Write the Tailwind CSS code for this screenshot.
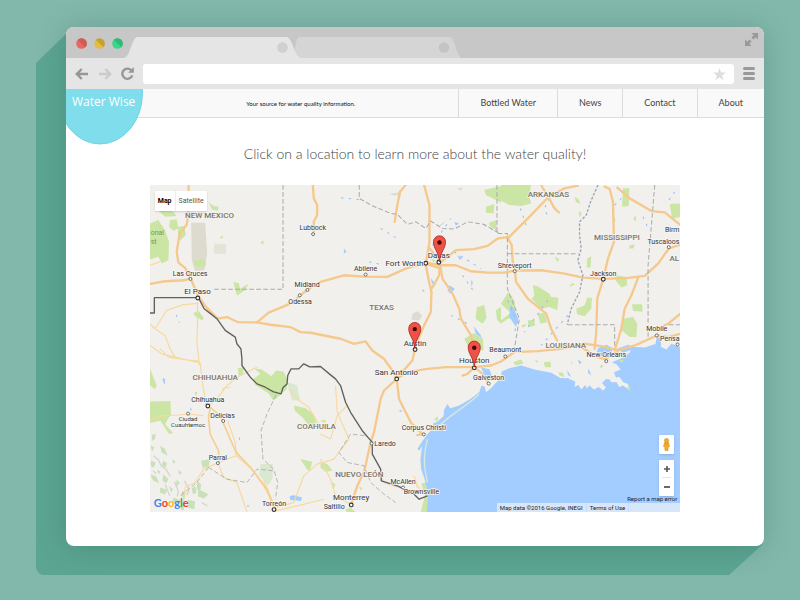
<!DOCTYPE html>
<html lang="en">
<head>
<meta charset="utf-8">
<meta name="viewport" content="width=device-width, initial-scale=1">
<title>Water Wise</title>
<script src="https://cdn.jsdelivr.net/npm/@tailwindcss/browser@4"></script>
</head>
<body class="flex min-h-screen flex-col bg-[#82b8ab] pt-[27px] pr-9 pb-[54px] pl-[66px] font-[Lato,sans-serif] text-[#444]">
<div class="relative flex flex-1 flex-col">
  <!-- long shadow -->
  <div class="absolute top-[7px] right-0.5 -bottom-[29px] -left-[30px] rounded-bl-lg bg-[#5ca592] [clip-path:polygon(30px_0,100%_0,100%_calc(100%_-_30px),calc(100%_-_33px)_100%,0_100%,0_29px)]"></div>
  <div class="relative flex flex-1 flex-col overflow-hidden rounded-lg bg-white shadow-[0_2px_28px_rgba(40,90,78,0.28)]">

    <!-- tab strip -->
    <div class="flex h-[31px] shrink-0 items-end bg-[#c7c7c7]">
      <div class="flex h-full w-[58px] items-center gap-[7px] pt-0.5 pl-[10px]">
        <svg class="size-[11px]" viewBox="0 0 11 11"><circle cx="5.500" cy="5.500" r="5.300" fill="#e96763"/><path d="M1.700 1.700A5.300 5.300 0 0 1 9.300 9.300Z" fill="#cf5c58"/></svg>
        <svg class="size-[11px]" viewBox="0 0 11 11"><circle cx="5.500" cy="5.500" r="5.300" fill="#e3bd3f"/><path d="M1.700 1.700A5.300 5.300 0 0 1 9.300 9.300Z" fill="#c4a238"/></svg>
        <svg class="size-[11px]" viewBox="0 0 11 11"><circle cx="5.500" cy="5.500" r="5.300" fill="#36d98a"/><path d="M1.700 1.700A5.300 5.300 0 0 1 9.300 9.300Z" fill="#2fba77"/></svg>
      </div>
      <svg class="h-[21px] w-[336px]" viewBox="0 0 336 21">
        <path d="M168 21C172 20 170 0 176 0H325C332 0 331 19 339 21Z" fill="#d5d5d5"/>
        <path d="M0 21C7 20 7 0 14 0H162C169 0 170 20 177 21Z" fill="#e5e5e5"/>
        <circle cx="158.500" cy="10.500" r="5.300" fill="#d0d0d0"/><circle cx="320" cy="10.500" r="5.300" fill="#c4c4c4"/>
      </svg>
      <button class="mr-1.5 mb-3 ml-auto size-[13px]" aria-label="Full screen">
        <svg viewBox="0 0 13 13" fill="#999"><path d="M6.500 0H13V6.500L10.800 4.300L8.500 6.600L6.400 4.500L8.700 2.200ZM0 6.500L2.200 8.700L4.500 6.400L6.600 8.500L4.300 10.800L6.500 13H0Z"/></svg>
      </button>
    </div>

    <!-- toolbar -->
    <div class="flex h-[31px] shrink-0 items-center bg-[#e5e5e5] pr-[9px] pl-[9px]">
      <button class="w-[13px]" aria-label="Back"><svg viewBox="0 0 13 12" fill="none" stroke="#969696" stroke-width="2.400"><path d="M6.700 1L1.800 6L6.700 11M2 6H13"/></svg></button>
      <button class="ml-[11px] w-[13px]" aria-label="Forward"><svg viewBox="0 0 13 12" fill="none" stroke="#cbcbcb" stroke-width="2.400"><path d="M6.300 1L11.200 6L6.300 11M11 6H0"/></svg></button>
      <button class="ml-[9px] w-[13px]" aria-label="Reload"><svg viewBox="0 0 13 13"><path d="M10.300 3.300A5.100 5.100 0 1 0 11.300 8.300" fill="none" stroke="#969696" stroke-width="2.300"/><path d="M12.800 0V5.700H7.200Z" fill="#969696"/></svg></button>
      <div class="relative ml-[9px] flex-1">
        <input type="text" aria-label="Address" class="block h-5 w-full rounded-[3px] bg-white px-2 text-xs outline-none">
        <button class="absolute top-[4px] right-2 w-[13px]" aria-label="Bookmark"><svg viewBox="0 0 24 23"><path d="M12 0L15 8.500H24L16.900 13.900L19.500 22.500L12 17.300L4.500 22.500L7.100 13.900L0 8.500H9Z" fill="#dedede"/></svg></button>
      </div>
      <button class="ml-[9px] flex w-3 flex-col gap-0.5" aria-label="Menu"><span class="h-[3px] w-full rounded-sm bg-[#999]"></span><span class="h-[3px] w-full rounded-sm bg-[#999]"></span><span class="h-[3px] w-full rounded-sm bg-[#999]"></span></button>
    </div>

    <!-- site header -->
    <header class="relative flex h-[29px] shrink-0 items-stretch border-b border-[#dcdcdc] bg-[#f9f9f9]">
      <a href="#" class="absolute top-0 left-0 z-10 h-[56px] w-[77px]">
        <svg class="absolute inset-0" viewBox="0 0 77 56"><ellipse cx="34" cy="4" rx="42.500" ry="51" fill="#80ddeb" stroke="#6dd3e2"/></svg>
        <span class="relative block pt-[5px] pl-1.5 font-['Open_Sans',sans-serif] text-xs leading-4 font-medium whitespace-nowrap text-white">Water Wise</span>
      </a>
      <p class="flex flex-1 items-center justify-center pl-[77px] text-[6px] text-[#111]">Your source for water quality information.</p>
      <nav class="flex text-[9px] leading-4">
        <a href="#" class="flex items-center border-l border-[#dcdcdc] px-[21px]">Bottled Water</a>
        <a href="#" class="flex items-center border-l border-[#dcdcdc] px-[21px]">News</a>
        <a href="#" class="flex items-center border-l border-[#dcdcdc] px-[21px]">Contact</a>
        <a href="#" class="flex items-center border-l border-[#dcdcdc] px-[21px]">About</a>
      </nav>
    </header>

    <main class="px-[12%] pt-6 pb-[34px]">
      <h1 class="text-center text-sm leading-6 font-light whitespace-nowrap">Click on a location to learn more about the water quality!</h1>
      <div class="relative mt-[19px] overflow-hidden font-[Roboto,sans-serif]">
        <svg class="block w-full" viewBox="0 0 1587 978" role="group" aria-label="Map of Texas and its neighbours">
          <defs>
            <g id="pin"><path d="M0 0C-3 -32 -18 -38 -18 -60A18 18 0 0 1 18 -60C18 -38 3 -32 0 0Z" fill="#f15145" stroke="#a42b24" stroke-width="2.500"/><circle cy="-58" r="6.500" fill="#3c0907"/></g>
            <circle id="dot" r="4.500" fill="#fff" stroke="#555" stroke-width="2.500"/>
            <circle id="big" r="5.500" fill="#fff" stroke="#333" stroke-width="3.500"/>
          </defs>
          <rect width="1587" height="978" fill="#f2f0ed"/>

          <!-- parks and forests -->
          <g fill="#cbe5a5">
            <g transform="translate(-15 -15)">
              <path d="M15 130L40 120L60 150L72 185L70 240L50 250L40 230L15 238ZM75 120L95 118L100 145L85 152L72 140ZM100 140L118 138L122 165L105 182L98 160ZM40 92L80 90L95 108L60 110ZM190 65L205 78L220 80L218 92L200 88ZM265 305L280 308L285 325L310 310L300 328L276 346L270 330ZM145 398L160 392L176 412L172 420L150 408ZM345 188L354 180L355 193ZM222 173L234 166L232 175Z"/>
              <path d="M138 128H180L186 220L178 270L150 272L140 240Z" fill="#dddbd0"/><path d="M207 190L243 192L242 222L206 220Z" fill="#e6e3d9"/>
              <path d="M150 240L180 236L182 256L160 262L146 254Z"/>
            </g>
            <g transform="translate(510 -15)">
              <path d="M490 30L540 18V68L515 55L495 45ZM495 80L520 72L518 100L495 98ZM503 128L527 120L526 150L508 140ZM468 380L490 374L497 412L485 430L464 415ZM525 390L540 380V430L528 418ZM430 475L460 458L486 476L488 510L445 505ZM330 235L345 240L338 246Z"/>
              <path d="M275 400L290 393L304 405L296 420L272 418ZM208 42L240 36L242 46L215 46ZM410 25L425 22L420 33Z" fill="#dedbd2"/>
            </g>
            <g transform="translate(1050 -15)">
              <path d="M0 15H90L85 50L90 70L60 78L25 75L0 62ZM365 25H384L382 78L362 80ZM505 72L535 70L537 110L512 116ZM220 50L232 58L238 72L224 65ZM345 285L375 290L378 315L360 322L342 300ZM225 385L250 375L258 352L272 352L270 385L250 408L228 402ZM95 315L110 318L145 340L150 350L172 352L168 390L145 380L120 385L92 355L100 345ZM110 400L130 398L138 425L118 430ZM80 420L100 418L102 436L82 440ZM60 435L78 430L68 442ZM392 372L422 372L424 394L395 392ZM365 415L395 410L408 430L405 470L385 470L362 450ZM0 420L25 400L40 385L45 412L20 415L0 430ZM22 335L40 360L45 405L25 395L0 370ZM258 235L270 228L268 262L256 262ZM385 195L400 192L396 205H383ZM160 228L175 238L168 245ZM395 115L405 106L403 125ZM332 105L343 118L338 130ZM205 320L222 312L212 308ZM232 92L242 100L235 112Z"/>
            </g>
            <g transform="translate(-15 480)">
              <path d="M15 168L76 166L78 205L60 235L84 262L72 265L46 225L15 232ZM15 70L35 120L30 130L15 120ZM278 68L294 66V88L280 92ZM322 102L345 85L325 68L350 72L378 92L392 75L414 78L426 100L424 130L405 148L384 165L368 142L330 118ZM446 180L480 188L505 205L514 240L495 245L470 215L448 195ZM465 340L500 348L494 375L484 370ZM148 138L157 140L152 152ZM524 225L540 222V232Z"/>
              <path d="M345 355H382V395L368 420L342 388ZM425 110L455 118L464 165L440 165Z" fill="#dbe8d0"/>
              <g fill="#c8e1b8">
                <path d="M20 268L32 265L30 280L22 286ZM45 300L60 310L68 330L50 320ZM55 345L66 352L62 366L50 358ZM55 385L70 400L64 412L52 404ZM95 400L104 412L92 425ZM155 405L168 415L165 440L155 430ZM168 345L196 340L190 362L172 366ZM85 455L105 462L98 478L82 470ZM18 345L32 350L26 366L18 362ZM16 385L34 392L42 412L24 404ZM46 425L66 432L60 446L44 440ZM112 435L122 440L118 458L108 450ZM140 428L150 420L154 440L144 446ZM160 430L190 445L176 458L158 452ZM72 420L84 430L78 440ZM128 462L150 466L148 490L130 486ZM110 470L120 478L114 494L104 488ZM36 372L46 376L42 386ZM82 340L92 348L84 354ZM100 372L110 380L102 388ZM16 300L28 304L22 318Z"/>
              </g>
              <path d="M25 330L40 342L48 360L64 372L76 392M88 408L100 436L96 452M60 415L74 450M118 405L132 430L126 448M24 375L34 384M170 470L186 480" fill="none" stroke="#d6d5d0" stroke-width="4"/>
            </g>
            <g transform="translate(510 480)">
              <path d="M0 348L20 355L36 375L15 378L0 365ZM75 490L90 485L105 498H78ZM302 412L318 410L328 455L318 498H300L312 450Z"/><path d="M115 420L125 428L120 435ZM30 408L45 415L38 430Z"/>
            </g>
          </g>

          <!-- sea -->
          <path d="M828 978L832 930L828 905L820 875L811 850L809 820L814 780L806 795L800 790L812 770L828 748L845 728L848 712L858 710L878 692L880 672L890 655L898 668L925 660L958 640L985 620L992 600L1002 604L1005 620L1020 608L1050 575L1052 558L1075 548L1110 540L1150 552L1200 562L1228 577L1250 578L1272 588L1270 604L1282 598L1290 612L1302 598L1306 608L1315 600L1328 612L1342 604L1356 615L1364 606L1352 592L1364 580L1375 582L1380 590L1396 590L1404 604L1415 600L1436 615L1430 595L1416 590L1404 574L1394 576L1388 560L1408 552L1397 538L1382 530L1410 518L1435 502L1442 484L1480 486L1512 476L1516 455L1530 460L1528 484L1545 492L1560 475L1587 485V978Z" fill="#a3ccff"/>
          <g fill="#a3ccff">
            <path d="M1340 488L1365 478L1385 488L1378 508L1348 512L1336 500ZM1280 522L1292 530L1284 536ZM1248 552L1260 575L1250 568ZM1312 548L1320 570L1310 562ZM1398 490L1430 478L1450 490L1415 502ZM990 545L1016 552L1022 570L1002 582L1000 566ZM1075 395L1095 425L1102 400L1088 370L1078 358ZM418 930L430 928L455 935L452 945L420 942Z"/>
            <path d="M37 577L45 580V598L40 590ZM119 664L126 672L121 675ZM744 674L755 674L750 680ZM866 125L886 108L870 118ZM910 110L925 115L915 122ZM895 300L912 310L898 325L890 315ZM840 280L850 290L844 298ZM960 285L966 290L962 305ZM968 422L990 450L992 458L975 445ZM920 210L935 218L926 224ZM580 190L588 200L580 205ZM816 310L822 318L815 320ZM742 440L746 432L740 445Z"/>
          </g>
          <g fill="#cbe5a5"><path d="M1086 530L1110 522L1118 534L1095 540ZM1178 530L1198 528L1200 545L1182 545ZM1222 560L1235 562L1240 575L1225 570ZM1345 540L1356 538L1350 550ZM1430 598L1436 602L1434 618L1428 608ZM1258 524L1264 532L1262 538ZM1404 524L1418 522L1412 532ZM850 700L862 692L860 708ZM1150 524L1162 526L1158 532Z"/></g>
          <path d="M830 760C820 800 816 830 830 890M850 735C890 690 940 668 985 625" fill="none" stroke="#d5ead8" stroke-width="4"/>
          <g fill="none" stroke="#8fbdf5" stroke-width="3" stroke-dasharray="7 16">
            <path d="M572 38L640 45M690 130L740 160M845 180L900 100M910 200L990 250M935 270L970 320M1070 345L1100 410L1090 440M1108 70L1125 120M1195 40L1180 70L1190 95M1390 60L1410 40M1475 95L1490 130M1570 20L1545 55M1190 345L1120 440M1250 390L1170 480M78 388L88 412M268 755V770M290 960H310M1000 120L1035 140M655 230L700 240M900 390L960 420"/>
          </g>

          <!-- minor roads -->
          <g fill="none" stroke="#f7d9a0" stroke-width="3.500" stroke-linejoin="round">
            <path d="M0 415L15 430L45 450L60 490L75 515L150 532L158 600L170 665M15 430L50 375L100 358L145 354M142 350V420L140 470L148 540M0 480L35 505L75 515M30 490L55 515L100 522L148 527"/>
            <path d="M170 665L200 640L230 600L262 575L290 560L320 545M215 610L240 605M0 700L40 690L85 688L115 685L160 690M232 705L255 770L258 810L300 845L340 900L370 960M258 810L205 830L160 850L135 890L105 905L100 950M205 835L220 875L260 890L290 978M372 960L360 930L340 885"/>
            <path d="M415 610L440 640L475 665L510 725M372 965L430 950L460 870L500 835L550 820L595 760L560 680L555 600M375 975L440 960L520 940M510 820L540 880L555 930L600 955M510 745L540 760L560 690L590 660M740 905L700 890L690 870M800 905L790 870M800 900L815 920M0 240L30 230"/>
          </g>
          <path d="M180 665L175 695L180 745L205 795L207 830M180 665L210 690L240 760L258 800L305 850L350 910L372 965" fill="none" stroke="#f5cf8f" stroke-width="5"/>

          <!-- major roads -->
          <g fill="none" stroke="#f5c88c" stroke-width="7" stroke-linejoin="round" stroke-linecap="round">
            <path d="M115 0L118 60L110 118L88 148L80 200L85 232L105 248L121 278L143 330L165 362L203 400L230 395L262 410L320 411L355 382L420 355L472 312L510 290L580 270L640 274L710 275L765 250L825 232L868 240"/>
            <path d="M0 296L45 288L100 285L121 280M320 411L360 418L420 425L450 440L480 442L510 448L570 460L610 475L645 468L665 495L700 520L725 555L738 578"/>
            <path d="M487 0L490 40L500 60V90L490 110V138M765 0L748 20L740 60L735 90L732 110M820 0L836 60V170L828 220L825 240L835 290L842 320L840 380L820 420L795 480L785 525L745 570L738 580L745 640L780 710L815 745M837 190L868 230L865 270L850 298L842 310"/>
            <path d="M868 232L915 195L970 192L1010 182L1040 160L1075 155L1140 90L1190 38L1240 10L1280 2M868 240L915 240L960 258L1010 262L1060 262L1091 256L1170 255L1240 265L1295 277L1356 281L1430 278L1480 272L1520 235L1552 190L1587 178"/>
            <path d="M868 240L875 280L905 325L925 370L930 400L960 450L970 490L972 530M738 580L770 560L830 550L885 545L970 545L1020 540L1050 528L1090 500L1160 497L1230 490L1300 475L1350 482L1400 495L1450 480L1517 450L1550 455L1587 445M738 580L700 615L690 640L670 740L660 770L640 860L620 900L602 955M970 545L950 565L935 570M970 545L995 565L1012 592M825 235L870 250"/>
            <path d="M1190 32L1210 70L1223 82M1187 30L1170 0M1360 5L1375 12L1385 50L1388 170L1370 220L1356 281L1338 340L1335 440L1330 490M1398 8L1435 40L1500 78L1540 82L1587 120M1460 278L1440 330L1420 370L1410 430L1390 495M1070 158L1082 180L1085 230L1092 256L1095 290L1130 340L1185 385L1200 430L1218 465M1587 385L1550 415L1515 430M1290 485L1340 515L1362 522L1385 505L1400 500M815 745L800 748"/>
          </g>

          <!-- state and national borders -->
          <g fill="none" stroke="#aaa" stroke-width="3" stroke-dasharray="14 7">
            <path d="M398 0V312H185M626 0V40L665 62L720 85L740 88L770 118L795 110L825 130L840 108L875 130L910 132L950 110L1000 118L1045 145M1038 0V145H1069V310L1105 400L1090 490M1070 206H1282M1510 0L1490 240V460M1250 418H1390V480M1587 418H1550"/>
            <path d="M377 628L350 685L332 735L338 820L370 850L382 890L375 940M175 845L230 880L290 890L320 850L370 855M175 845L140 890L90 930M642 750L600 745L565 800L590 830L640 840L660 890L700 925L735 950" stroke-width="2.500"/>
          </g>
          <path d="M1340 0L1318 50L1305 90L1285 110V150L1290 190L1280 225L1295 270L1285 320L1260 370L1248 418" fill="none" stroke="#9aa5b5" stroke-width="4" stroke-dasharray="8 5"/>
          <path d="M0 383H13V337H145L162 370L180 384L200 400L225 435L255 455L260 475L272 490L275 520L275 540L300 575L320 595L345 605L368 618L392 625L398 606L410 595L412 570L422 550L445 550L460 535L478 544L510 543L540 568L555 580L570 600L585 650L600 680L635 735L665 770V805L690 850L692 885L740 900L790 925L805 940L830 930" fill="none" stroke="#606060" stroke-width="4" stroke-linejoin="round"/>

          <!-- town markers -->
          <use href="#dot" x="121" y="281"/><use href="#dot" x="488" y="147"/><use href="#dot" x="448" y="330"/><use href="#dot" x="471" y="314"/><use href="#dot" x="645" y="268"/><use href="#dot" x="1091" y="258"/><use href="#dot" x="1552" y="186"/><use href="#dot" x="114" y="684"/><use href="#dot" x="219" y="706"/><use href="#dot" x="203" y="832"/><use href="#dot" x="663" y="773"/><use href="#dot" x="757" y="905"/><use href="#dot" x="1013" y="594"/><use href="#dot" x="1063" y="513"/><use href="#dot" x="1365" y="527"/><use href="#dot" x="1516" y="450"/><use href="#dot" x="1578" y="477"/><use href="#dot" x="819" y="746"/>
          <use href="#big" x="143" y="338"/><use href="#big" x="825" y="234"/><use href="#big" x="864" y="231"/><use href="#big" x="793" y="492"/><use href="#big" x="738" y="580"/><use href="#big" x="970" y="547"/><use href="#big" x="173" y="661"/><use href="#big" x="602" y="957"/><use href="#big" x="371" y="971"/><use href="#big" x="1356" y="282"/>

          <!-- region names -->
          <g class="text-[24px] font-medium" fill="#7b7565" stroke="#f5f3f0" stroke-width="4" paint-order="stroke" text-anchor="middle">
            <text x="178" y="99">NEW MEXICO</text><text x="693" y="375">TEXAS</text><text x="1192" y="35">ARKANSAS</text><text x="1397" y="164">MISSISSIPPI</text><text x="1244" y="489">LOUISIANA</text><text x="195" y="584">CHIHUAHUA</text><text x="498" y="729">COAHUILA</text><text x="626" y="875">NUEVO LEÓN</text><text x="1583" y="228" text-anchor="end">AL</text>
          </g>
          <!-- large cities -->
          <g class="text-[24px]" fill="#333" stroke="#f8f7f5" stroke-width="4" paint-order="stroke" text-anchor="middle">
            <text x="142" y="326">El Paso</text><text x="818" y="243" text-anchor="end">Fort Worth</text><text x="864" y="219">Dallas</text><text x="793" y="481">Austin</text><text x="737" y="567">San Antonio</text><text x="970" y="532">Houston</text><text x="602" y="943">Monterrey</text>
          </g>
          <!-- towns -->
          <g class="text-[21px]" fill="#333" stroke="#f8f7f5" stroke-width="4" paint-order="stroke" text-anchor="middle">
            <text x="120" y="271">Las Cruces</text><text x="487" y="135">Lubbock</text><text x="470" y="304">Midland</text><text x="449" y="356">Odessa</text><text x="645" y="257">Abilene</text><text x="1091" y="247">Shreveport</text><text x="1356" y="271">Jackson</text><text x="1584" y="176" text-anchor="end">Tuscaloos</text><text x="1584" y="141" text-anchor="end">Birm</text><text x="173" y="649">Chihuahua</text><text x="217" y="696">Delicias</text><text x="203" y="822">Parral</text><text x="671" y="781" text-anchor="start">Laredo</text><text x="819" y="733">Corpus Christi</text><text x="757" y="894">McAllen</text><text x="812" y="925">Brownsville</text><text x="1013" y="583">Galveston</text><text x="1063" y="501">Beaumont</text><text x="1365" y="515">New Orleans</text><text x="1516" y="438">Mobile</text><text x="1584" y="468" text-anchor="end">Pensa</text><text x="371" y="959">Torreón</text><text x="551" y="970">Saltillo</text>
            <text x="114" y="706" class="text-[18px]">Ciudad</text><text x="114" y="725" class="text-[18px]">Cuauhtemoc</text>
          </g>
          <g class="text-[21px]" fill="#6f9a63"><text x="2" y="149">onal</text><text x="2" y="177">st</text></g>

          <!-- clickable locations -->
          <a href="#dallas" aria-label="Dallas"><use href="#pin" x="866" y="230"/></a>
          <a href="#austin" aria-label="Austin"><use href="#pin" x="792" y="489"/></a>
          <a href="#houston" aria-label="Houston"><use href="#pin" x="970" y="545"/></a>
        </svg>

        <div class="absolute top-1.5 left-[5px] flex h-5 rounded-[1px] bg-white text-[7px] leading-5 shadow-[0_1px_2px_rgba(0,0,0,0.15)]">
          <button class="border-r border-[#eee] px-[3px] font-bold text-black">Map</button>
          <button class="px-[3px] text-[#555]">Satellite</button>
        </div>
        <div class="absolute bottom-0 left-1 font-[Lato,sans-serif] text-[11px] leading-[18px] font-bold" aria-label="Google"><span class="text-[#4285f4]">G</span><span class="text-[#ea4335]">o</span><span class="text-[#fbbc05]">o</span><span class="text-[#4285f4]">g</span><span class="text-[#34a853]">l</span><span class="text-[#ea4335]">e</span></div>
        <button class="absolute right-1.5 bottom-[58px] flex h-[19px] w-[15px] items-center justify-center rounded-[1px] bg-white shadow-sm" aria-label="Street View"><svg class="h-[13px] w-[7px]" viewBox="0 0 14 26" fill="#f5ae1d" stroke="#c98712"><path d="M3 9H11L13 17H10.500L10 25H4L3.500 17H1Z"/><circle cx="7" cy="5" r="4.200"/><path d="M4 10L7 13L10 10" fill="none"/></svg></button>
        <div class="absolute right-1.5 bottom-4 flex h-9 w-[15px] flex-col rounded-[1px] bg-white shadow-sm">
          <button class="flex flex-1 items-center justify-center" aria-label="Zoom in"><svg class="size-1.5" viewBox="0 0 6 6"><path d="M3 0V6M0 3H6" stroke="#555" stroke-width="1.600"/></svg></button>
          <span class="mx-[3px] h-px bg-[#e6e6e6]"></span>
          <button class="flex flex-1 items-center justify-center" aria-label="Zoom out"><svg class="size-1.5" viewBox="0 0 6 6"><path d="M0 3H6" stroke="#444" stroke-width="1.600"/></svg></button>
        </div>
        <div class="absolute right-0 bottom-0 text-[6px] text-[#222]">
          <a href="#" class="block pr-[3px] text-right leading-[8px]">Report a map error</a>
          <div class="flex bg-[#e1ebf8]/85 leading-[9px]"><span class="px-[3px]">Map data ©2016 Google, INEGI</span><a href="#" class="border-x border-[#c9dcf5] px-[3px]">Terms of Use</a><span class="w-[51px]"></span></div>
        </div>
      </div>
    </main>
  </div>
</div>
</body>
</html>
